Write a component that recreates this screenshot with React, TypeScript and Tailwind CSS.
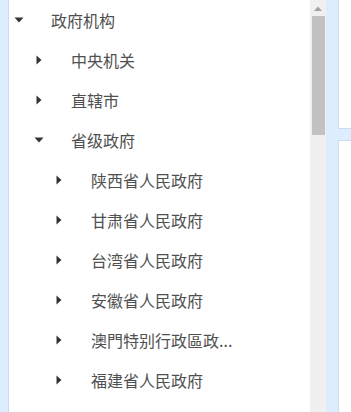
import React from "react";

type Node = { label: string; level: 0 | 1 | 2; open?: boolean };

const nodes: Node[] = [
  { label: "政府机构", level: 0, open: true },
  { label: "中央机关", level: 1 },
  { label: "直辖市", level: 1 },
  { label: "省级政府", level: 1, open: true },
  { label: "陕西省人民政府", level: 2 },
  { label: "甘肃省人民政府", level: 2 },
  { label: "台湾省人民政府", level: 2 },
  { label: "安徽省人民政府", level: 2 },
  { label: "澳門特别行政區政...", level: 2 },
  { label: "福建省人民政府", level: 2 },
];

const indent = ["pl-[5px]", "pl-[25px]", "pl-[45px]"];

const Arrow = ({ open }: { open?: boolean }) => (
  <span className="flex w-[10px] h-[10px] items-center justify-center">
    {open ? (
      <svg width="10" height="6" viewBox="0 0 10 6">
        <path d="M0.5 0.5 L9.5 0.5 L5 5.5 Z" fill="#333" />
      </svg>
    ) : (
      <svg width="6" height="10" viewBox="0 0 6 10">
        <path d="M0.5 0.5 L5.5 5 L0.5 9.5 Z" fill="#333" />
      </svg>
    )}
  </span>
);

export default function App() {
  return (
    <div
      className="flex w-[351px] h-[412px] overflow-hidden bg-[#deedfd]"
      style={{ fontFamily: '"Noto Sans CJK SC", "Noto Sans", sans-serif' }}
    >
      {/* tree panel */}
      <div className="ml-[8px] flex w-[318px] h-full border-l border-[#c8dcf2] bg-white">
        <div className="flex-1 overflow-hidden">
          {nodes.map((n) => (
            <div
              key={n.label}
              className={`flex h-10 items-center ${indent[n.level]}`}
            >
              <Arrow open={n.open} />
              <span className="ml-[27px] text-[16px] leading-none text-[#505050] whitespace-nowrap">
                {n.label}
              </span>
            </div>
          ))}
        </div>
        {/* scrollbar */}
        <div className="flex w-[16px] h-full flex-col items-center bg-[#f0f0f0]">
          <div className="flex h-[16px] w-full items-center justify-center">
            <svg width="8" height="5" viewBox="0 0 8 5">
              <path d="M0 5 L4 0.5 L8 5 Z" fill="#a3a3a3" />
            </svg>
          </div>
          <div className="w-[13px] h-[119px] bg-[#c1c1c1]" />
        </div>
      </div>

      {/* right panels */}
      <div className="ml-[12px] flex flex-1 flex-col">
        <div className="h-[129px] border-l border-b border-[#c8dcf2] bg-white" />
        <div className="mt-[11px] flex-1 border-l border-t border-[#c8dcf2] bg-white" />
      </div>
    </div>
  );
}
